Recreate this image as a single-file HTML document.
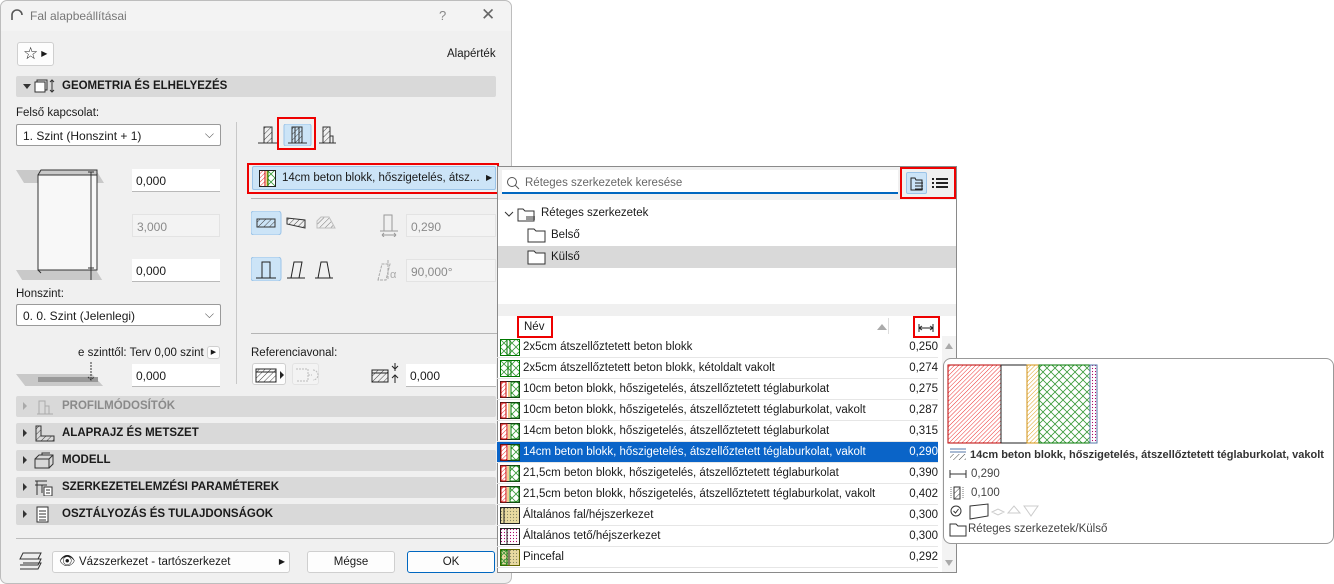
<!DOCTYPE html>
<html><head><meta charset="utf-8"><style>
*{box-sizing:border-box;margin:0;padding:0}
body{width:1334px;height:584px;background:#fff;position:relative;overflow:hidden;font-family:"Liberation Sans",sans-serif;font-size:12px;color:#1a1a1a}
.a{position:absolute}
.dlg{left:0;top:0;width:512px;height:584px;background:#f0f0f0;border:1px solid #bdbdbd;border-radius:7px}
.inp{position:absolute;background:#fff;border-bottom:1px solid #b9b9b9;height:23px;padding:5px 4px;font-size:12px}
.inp.dis{background:#f3f3f3;border:1px solid #e3e3e3;color:#8a8a8a}
.sel{position:absolute;background:#fff;border:1px solid #9a9a9a;border-radius:2px;height:22px;padding:4px 6px}
.bar{position:absolute;left:16px;width:480px;height:21px;background:#d9d9d9;border-radius:2px;font-weight:bold;font-size:11.5px;padding:4px 0 0 46px}
.bar .tri{position:absolute;left:7px;top:6px;width:0;height:0;border-left:4px solid #333;border-top:4px solid transparent;border-bottom:4px solid transparent}
.bar svg{position:absolute;left:18px;top:2px}
.red{position:absolute;border:2px solid #e00;}
.btn{position:absolute;background:#fdfdfd;border:1px solid #cfcfcf;border-radius:3px;text-align:center;padding-top:4px}
.row{position:absolute;left:497px;width:441px;height:21px;border-bottom:1px solid #e6e6e6;font-size:11.5px}
.row .n{position:absolute;left:26px;top:4px;white-space:nowrap}
.row .v{position:absolute;right:0;top:4px}
.row svg{position:absolute;left:3px;top:2px}
.row.s{background:#0a64c8;color:#fff}
</style></head><body>
<svg width="0" height="0" style="position:absolute"><defs>
<pattern id="hr" width="3" height="3" patternUnits="userSpaceOnUse" patternTransform="rotate(45)"><line x1="0" y1="0" x2="0" y2="3" stroke="#e33" stroke-width="1"/></pattern>
<pattern id="hk" width="4" height="4" patternUnits="userSpaceOnUse" patternTransform="rotate(45)"><line x1="0" y1="0" x2="0" y2="4" stroke="#444" stroke-width="1"/></pattern>
<pattern id="hy" width="3" height="3" patternUnits="userSpaceOnUse" patternTransform="rotate(45)"><line x1="0" y1="0" x2="0" y2="3" stroke="#e0a020" stroke-width="1"/></pattern>
<pattern id="xg" width="8" height="8" patternUnits="userSpaceOnUse"><path d="M0 0L8 8M8 0L0 8" stroke="#3a9a3a" stroke-width=".8"/></pattern>
<pattern id="dt" width="3" height="3" patternUnits="userSpaceOnUse"><circle cx="1.5" cy="1.5" r=".6" fill="#a06"/></pattern>
<pattern id="yd" width="3" height="3" patternUnits="userSpaceOnUse"><rect width="3" height="3" fill="#e8d9a0"/><circle cx="1.5" cy="1.5" r=".6" fill="#886"/></pattern>
</defs></svg>

<div class="a dlg"></div>
<div class="a" style="left:1px;top:1px;width:510px;height:30px;background:#f3f3f3;border-radius:7px 7px 0 0"></div>
<svg class="a" style="left:10px;top:9px" width="14" height="12"><path d="M2 11V6a5 5 0 0 1 10 0" fill="none" stroke="#555" stroke-width="1.6"/></svg>
<div class="a" style="left:30px;top:9px;color:#777;font-size:12px">Fal alapbeállításai</div>
<div class="a" style="left:439px;top:8px;color:#888;font-size:13px">?</div>
<div class="a" style="left:481px;top:5px;color:#666;font-size:17px">✕</div>
<div class="btn" style="left:17px;top:42px;width:37px;height:24px;padding:1px 0 0 0;text-align:left"><span style="font-size:17px;margin-left:5px">☆</span><span style="font-size:8px;margin-left:3px;position:relative;top:-3px">▶</span></div>
<div class="a" style="left:447px;top:48px;font-size:11.5px">Alapérték</div>

<div class="bar" style="top:76px;padding-left:46px"><span class="tri" style="border-left:4px solid transparent;border-right:4px solid transparent;border-top:5px solid #333;border-bottom:0;top:8px"></span><svg width="22" height="17"><rect x="3" y="2" width="10" height="10" fill="none" stroke="#333"/><rect x="1" y="4" width="10" height="10" fill="#fff" stroke="#333"/><path d="M18 2v12M16 4l2-2 2 2M16 12l2 2 2-2" stroke="#333" fill="none"/></svg>GEOMETRIA ÉS ELHELYEZÉS</div>

<div class="a" style="left:16px;top:107px;font-size:11.5px">Felső kapcsolat:</div>
<div class="sel" style="left:16px;top:124px;width:205px">1. Szint (Honszint + 1)<span style="position:absolute;right:6px;top:2px;color:#555">⌵</span></div>

<svg class="a" style="left:16px;top:168px" width="90" height="112">
<polygon points="0,2 80,2 88,15 8,15" fill="#c9c9c9"/>
<polygon points="0,102 80,102 88,115 8,115" fill="#c9c9c9"/>
<rect x="22" y="7" width="59" height="95" fill="#f8f8f8" stroke="#333"/>
<path d="M22 7L25 2h56l0 5M22 7v95l3 3" fill="none" stroke="#333"/>
<path d="M75 4v108M72 4h6M72 100h6" stroke="#333" fill="none"/>
</svg>
<div class="inp" style="left:132px;top:169px;width:88px">0,000</div>
<div class="inp dis" style="left:132px;top:214px;width:88px">3,000</div>
<div class="inp" style="left:132px;top:259px;width:88px">0,000</div>
<div class="a" style="left:16px;top:288px;font-size:11.5px">Honszint:</div>
<div class="sel" style="left:16px;top:304px;width:205px">0. 0. Szint (Jelenlegi)<span style="position:absolute;right:6px;top:2px;color:#555">⌵</span></div>
<div class="a" style="left:78px;top:347px;font-size:11.5px">e szinttől: Terv 0,00 szint</div>
<div class="btn" style="left:207px;top:346px;width:13px;height:13px;padding:0;font-size:7px;line-height:12px">▶</div>
<svg class="a" style="left:16px;top:362px" width="90" height="24"><polygon points="0,12 76,12 88,25 10,25" fill="#c9c9c9"/><rect x="22" y="15" width="60" height="5" fill="#999"/><path d="M75 0v18M72 15l3 3 3-3" stroke="#333" fill="none" stroke-dasharray="2 1"/></svg>
<div class="inp" style="left:132px;top:364px;width:88px">0,000</div>

<div class="a" style="left:236px;top:122px;width:1px;height:262px;background:#c8c8c8"></div>

<svg class="a" style="left:257px;top:124px" width="80" height="22">
<rect x="7" y="3" width="8" height="16" fill="url(#hk)" stroke="#333"/><path d="M1 19h19" stroke="#333"/>
<rect x="27" y="0" width="27" height="22" rx="2" fill="#cce4f7" stroke="#9cc4e8"/>
<rect x="35" y="3" width="10" height="16" fill="url(#hk)" stroke="#333"/><path d="M31 19h19M38 3v16M42 3v16" stroke="#333"/>
<rect x="66" y="3" width="7" height="16" fill="url(#hk)" stroke="#333"/><path d="M62 19h17M73 12h3v7" stroke="#333" fill="none"/>
</svg>
<div class="red" style="left:277px;top:117px;width:39px;height:33px"></div>

<div class="a" style="left:252px;top:166px;width:244px;height:24px;background:#cce4f7;border:1px solid #9cc4e8;border-radius:2px"></div>
<svg class="a" style="left:259px;top:170px" width="17" height="17"><rect x=".5" y=".5" width="16" height="16" fill="#fff" stroke="#222"/><rect x="1" y="1" width="5" height="15" fill="url(#hr)"/><path d="M6 1v15" stroke="#c00"/><path d="M8 1v15" stroke="#e0a020"/><rect x="9" y="1" width="7" height="15" fill="url(#xg)"/><path d="M9 1v15" stroke="#070"/></svg>
<div class="a" style="left:282px;top:172px;font-size:11.5px">14cm beton blokk, hőszigetelés, átsz...</div>
<div class="a" style="left:486px;top:173px;font-size:8px">▶</div>
<div class="red" style="left:247px;top:163px;width:252px;height:31px"></div>
<div class="a" style="left:251px;top:198px;width:246px;height:1px;background:#b5b5b5"></div>

<svg class="a" style="left:251px;top:211px" width="90" height="24">
<rect x="0" y="0" width="30" height="24" rx="3" fill="#cce4f7" stroke="#9cc4e8"/>
<rect x="6" y="8" width="18" height="8" fill="url(#hk)" stroke="#333"/>
<polygon points="36,7 54,9 54,17 36,13" fill="url(#hk)" stroke="#333"/>
<path d="M66 17V10l4-4h8l6 11z" fill="url(#hk)" stroke="#aaa" opacity=".7"/>
</svg>
<svg class="a" style="left:378px;top:213px" width="22" height="24"><path d="M6 2h8v16h-8zM2 18h18M4 22h14M4 22l2-2M4 22l2 2M18 22l-2-2M18 22l-2 2" stroke="#999" fill="none"/></svg>
<div class="inp dis" style="left:406px;top:214px;width:90px">0,290</div>
<svg class="a" style="left:251px;top:257px" width="90" height="24">
<rect x="0" y="0" width="30" height="24" rx="3" fill="#cce4f7" stroke="#9cc4e8"/>
<path d="M5 21h20M11 21V5h8v16" stroke="#222" fill="none"/>
<path d="M36 21h18M40 21l3-16h8l-3 16" stroke="#222" fill="none"/>
<path d="M64 21h18M67 21l3-16h6l3 16" stroke="#222" fill="none"/>
</svg>
<svg class="a" style="left:376px;top:258px" width="26" height="24"><path d="M2 22l4-16h8l-4 16zM12 2v20" stroke="#aaa" fill="none" stroke-dasharray="3 1"/><text x="14" y="20" font-size="11" fill="#aaa" font-family="Liberation Sans">α</text></svg>
<div class="inp dis" style="left:406px;top:259px;width:90px">90,000°</div>

<div class="a" style="left:251px;top:333px;width:246px;height:1px;background:#b5b5b5"></div>
<div class="a" style="left:251px;top:347px;font-size:11.5px">Referenciavonal:</div>
<div class="btn" style="left:252px;top:363px;width:34px;height:22px;padding:0"><svg width="34" height="22"><rect x="3" y="5" width="20" height="13" fill="url(#hk)" stroke="#222"/><path d="M3 8h20" stroke="#222"/><path d="M27 7v8l4-4z" fill="#222"/></svg></div>
<div class="btn" style="left:292px;top:363px;width:27px;height:22px;padding:0;border-color:#e3e3e3;background:#f3f3f3"><svg width="27" height="22"><path d="M3 5h12v12H3M15 11h4M20 6a5 5 0 0 1 0 10" stroke="#bbb" fill="none" stroke-dasharray="2 1"/></svg></div>
<svg class="a" style="left:370px;top:361px" width="30" height="26"><rect x="2" y="9" width="16" height="12" fill="url(#hk)" stroke="#222"/><path d="M2 12h16M25 2v8M22 5l3 3 3-3M25 14v8M22 17l3-3 3 3" stroke="#222" fill="none"/></svg>
<div class="inp" style="left:406px;top:364px;width:90px">0,000</div>

<div class="bar" style="top:396px;color:#8a8a8a"><span class="tri" style="border-left-color:#aaa"></span><svg width="22" height="17"><path d="M3 16h16M5 16V3h6v13M11 8h4v8" stroke="#aaa" fill="none"/></svg>PROFILMÓDOSÍTÓK</div>
<div class="bar" style="top:423px"><span class="tri"></span><svg width="22" height="17"><path d="M2 1v15h18v-5H7V1z" fill="url(#hk)" stroke="#333"/></svg>ALAPRAJZ ÉS METSZET</div>
<div class="bar" style="top:450px"><span class="tri"></span><svg width="22" height="17"><path d="M1 7h14v9H1zM1 7l4-4h14v9l-4 4M15 7l4-4" stroke="#333" fill="none"/><path d="M8 3V1h8" stroke="#333" fill="none"/></svg>MODELL</div>
<div class="bar" style="top:477px"><span class="tri"></span><svg width="22" height="17"><path d="M1 2h12M1 6h12M3 2v14M8 6v8" stroke="#333" fill="none"/><rect x="10" y="8" width="8" height="9" fill="#fff" stroke="#333"/><path d="M12 11h4M12 14h4" stroke="#333"/></svg>SZERKEZETELEMZÉSI PARAMÉTEREK</div>
<div class="bar" style="top:504px"><span class="tri"></span><svg width="22" height="17"><rect x="3" y="1" width="11" height="15" fill="#fff" stroke="#333"/><path d="M5 5h7M5 8h7M5 11h7M5 14h7" stroke="#333"/></svg>OSZTÁLYOZÁS ÉS TULAJDONSÁGOK</div>

<div class="a" style="left:16px;top:538px;width:481px;height:1px;background:#bdbdbd"></div>
<svg class="a" style="left:18px;top:550px" width="26" height="22"><path d="M5 3h18l-3 6H2zM5 9h18l-3 6H2M5 13h18l-3 6H2" stroke="#333" fill="#eee"/></svg>
<div class="btn" style="left:52px;top:551px;width:238px;height:22px;text-align:left;padding:4px 0 0 26px;font-size:11.5px">Vázszerkezet - tartószerkezet<span style="position:absolute;left:6px;top:1px;font-size:13px">👁</span><span style="position:absolute;right:4px;top:5px;font-size:8px">▶</span></div>
<div class="btn" style="left:307px;top:551px;width:88px;height:22px;font-size:11.5px">Mégse</div>
<div class="btn" style="left:407px;top:551px;width:88px;height:22px;font-size:11.5px;border:1.5px solid #0067c0">OK</div>

<div class="a" style="left:497px;top:166px;width:460px;height:407px;background:#fff;border:1px solid #8a8a8a"></div>
<div class="a" style="left:498px;top:167px;width:458px;height:33px;background:#f0f0f0"></div>
<div class="a" style="left:502px;top:170px;width:396px;height:24px;background:#fff;border-bottom:2px solid #0067c0"></div>
<svg class="a" style="left:506px;top:176px" width="14" height="14"><circle cx="6" cy="6" r="4.5" stroke="#555" fill="none"/><path d="M9 9l4 4" stroke="#555"/></svg>
<div class="a" style="left:525px;top:177px;font-size:11.5px;color:#666">Réteges szerkezetek keresése</div>
<div class="a" style="left:906px;top:172px;width:21px;height:22px;background:#cce4f7;border:1px solid #9cc4e8;border-radius:2px"></div>
<svg class="a" style="left:906px;top:172px" width="46" height="22"><path d="M5 6h4l1 2h6v10H5z" stroke="#222" fill="none"/><path d="M9 11h8M9 14h8M9 17h8" stroke="#222"/><path d="M26 7h2M26 11h2M26 15h2M30 7h12M30 11h12M30 15h12" stroke="#222" stroke-width="2"/></svg>
<div class="red" style="left:900px;top:167px;width:56px;height:32px"></div>

<svg class="a" style="left:504px;top:205px" width="34" height="18"><path d="M1 7l4 4 4-4" stroke="#333" fill="none"/><path d="M14 4h5l2 2h9v10H14z" stroke="#333" fill="#fff"/><path d="M22 12h9M22 14h9" stroke="#333"/></svg>
<div class="a" style="left:541px;top:207px;font-size:11.5px">Réteges szerkezetek</div>
<svg class="a" style="left:527px;top:227px" width="20" height="16"><path d="M1 2h6l2 2h9v11H1z" stroke="#333" fill="#fff"/></svg>
<div class="a" style="left:551px;top:229px;font-size:11.5px">Belső</div>
<div class="a" style="left:498px;top:246px;width:458px;height:22px;background:#d9d9d9"></div>
<svg class="a" style="left:527px;top:249px" width="20" height="16"><path d="M1 2h6l2 2h9v11H1z" stroke="#333" fill="#fff"/></svg>
<div class="a" style="left:551px;top:251px;font-size:11.5px">Külső</div>
<div class="a" style="left:498px;top:304px;width:458px;height:12px;background:#f0f0f0"></div>
<div class="a" style="left:524px;top:321px;font-size:11.5px">Név</div>
<div class="a" style="left:877px;top:324px;width:0;height:0;border-left:5px solid transparent;border-right:5px solid transparent;border-bottom:6px solid #aaa"></div>
<div class="a" style="left:888px;top:318px;width:1px;height:16px;background:#ddd"></div>
<svg class="a" style="left:918px;top:323px" width="16" height="10"><path d="M1 1v8M15 1v8M1 5h14M1 5l3-2M1 5l3 2M15 5l-3-2M15 5l-3 2" stroke="#222" fill="none"/></svg>
<div class="red" style="left:517px;top:316px;width:36px;height:22px"></div>
<div class="red" style="left:913px;top:316px;width:27px;height:22px"></div>
<div class="a" style="left:942px;top:336px;width:14px;height:236px;background:#f3f3f3"></div>
<div class="a" style="left:945px;top:343px;border-left:4px solid transparent;border-right:4px solid transparent;border-bottom:6px solid #aaa"></div>
<div class="a" style="left:945px;top:560px;border-left:4px solid transparent;border-right:4px solid transparent;border-top:6px solid #aaa"></div>

<div class="row" style="top:337px"><svg width="20" height="17"><rect x=".5" y=".5" width="19" height="16" fill="url(#xg)" stroke="#070"/><path d="M7 1v15M10 1v15" stroke="#070"/></svg><span class="n">2x5cm átszellőztetett beton blokk</span><span class="v">0,250</span></div>
<div class="row" style="top:358px"><svg width="20" height="17"><rect x=".5" y=".5" width="19" height="16" fill="url(#xg)" stroke="#070"/><path d="M8 1v15M11 1v15" stroke="#070"/></svg><span class="n">2x5cm átszellőztetett beton blokk, kétoldalt vakolt</span><span class="v">0,274</span></div>
<div class="row" style="top:379px"><svg width="20" height="17"><rect x=".5" y=".5" width="19" height="16" fill="#fff" stroke="#222"/><rect x="1" y="1" width="5" height="15" fill="url(#hr)" stroke="#c00"/><path d="M9 1v15" stroke="#e0a020"/><rect x="11" y="1" width="8" height="15" fill="url(#xg)" stroke="#070"/></svg><span class="n">10cm beton blokk, hőszigetelés, átszellőztetett téglaburkolat</span><span class="v">0,275</span></div>
<div class="row" style="top:400px"><svg width="20" height="17"><rect x=".5" y=".5" width="19" height="16" fill="#fff" stroke="#222"/><rect x="1" y="1" width="5" height="15" fill="url(#hr)" stroke="#c00"/><path d="M9 1v15" stroke="#e0a020"/><rect x="11" y="1" width="8" height="15" fill="url(#xg)" stroke="#070"/></svg><span class="n">10cm beton blokk, hőszigetelés, átszellőztetett téglaburkolat, vakolt</span><span class="v">0,287</span></div>
<div class="row" style="top:421px"><svg width="20" height="17"><rect x=".5" y=".5" width="19" height="16" fill="#fff" stroke="#222"/><rect x="1" y="1" width="6" height="15" fill="url(#hr)" stroke="#c00"/><path d="M9 1v15" stroke="#e0a020"/><rect x="11" y="1" width="8" height="15" fill="url(#xg)" stroke="#070"/></svg><span class="n">14cm beton blokk, hőszigetelés, átszellőztetett téglaburkolat</span><span class="v">0,315</span></div>
<div class="row s" style="top:442px"><svg width="20" height="17"><rect x=".5" y=".5" width="19" height="16" fill="#fff" stroke="#222"/><rect x="1" y="1" width="6" height="15" fill="url(#hr)" stroke="#c00"/><path d="M9 1v15" stroke="#e0a020"/><rect x="11" y="1" width="8" height="15" fill="url(#xg)" stroke="#070"/></svg><span class="n">14cm beton blokk, hőszigetelés, átszellőztetett téglaburkolat, vakolt</span><span class="v">0,290</span></div>
<div class="row" style="top:463px"><svg width="20" height="17"><rect x=".5" y=".5" width="19" height="16" fill="#fff" stroke="#222"/><rect x="1" y="1" width="5" height="15" fill="url(#hr)" stroke="#c00"/><path d="M8 1v15" stroke="#e0a020"/><rect x="10" y="1" width="9" height="15" fill="url(#xg)" stroke="#070"/></svg><span class="n">21,5cm beton blokk, hőszigetelés, átszellőztetett téglaburkolat</span><span class="v">0,390</span></div>
<div class="row" style="top:484px"><svg width="20" height="17"><rect x=".5" y=".5" width="19" height="16" fill="#fff" stroke="#222"/><rect x="1" y="1" width="5" height="15" fill="url(#hr)" stroke="#c00"/><path d="M8 1v15" stroke="#e0a020"/><rect x="10" y="1" width="9" height="15" fill="url(#xg)" stroke="#070"/></svg><span class="n">21,5cm beton blokk, hőszigetelés, átszellőztetett téglaburkolat, vakolt</span><span class="v">0,402</span></div>
<div class="row" style="top:505px"><svg width="20" height="17"><rect x=".5" y=".5" width="19" height="16" fill="url(#yd)" stroke="#222"/><path d="M4 1v15" stroke="#222"/></svg><span class="n">Általános fal/héjszerkezet</span><span class="v">0,300</span></div>
<div class="row" style="top:526px"><svg width="20" height="17"><rect x=".5" y=".5" width="19" height="16" fill="url(#dt)" stroke="#222"/><path d="M7 1v15" stroke="#222"/></svg><span class="n">Általános tető/héjszerkezet</span><span class="v">0,300</span></div>
<div class="row" style="top:547px"><svg width="20" height="17"><rect x=".5" y=".5" width="19" height="16" fill="url(#yd)" stroke="#660"/><rect x="1" y="1" width="6" height="15" fill="url(#xg)" stroke="#070"/><path d="M9 1v15" stroke="#222"/></svg><span class="n">Pincefal</span><span class="v">0,292</span></div>

<div class="a" style="left:943px;top:358px;width:391px;height:186px;background:#fff;border:1px solid #999;border-radius:8px"></div>
<svg class="a" style="left:947px;top:364px" width="152" height="80">
<rect x="1" y="1" width="53" height="78" fill="url(#hr)" stroke="#b00"/>
<rect x="54" y="1" width="26" height="78" fill="#fff" stroke="#222"/>
<rect x="80" y="1" width="12" height="78" fill="url(#hy)" stroke="#d09010"/>
<rect x="92" y="1" width="51" height="78" fill="url(#xg)" stroke="#070"/>
<rect x="143" y="1" width="7" height="78" fill="url(#dt)" stroke="#57a"/>
</svg>
<svg class="a" style="left:949px;top:447px" width="18" height="14"><path d="M1 2h16M1 5h16" stroke="#57a"/><rect x="1" y="7" width="16" height="6" fill="url(#hk)"/></svg>
<div class="a" style="left:970px;top:449px;font-size:11px;font-weight:bold;color:#333;white-space:nowrap">14cm beton blokk, hőszigetelés, átszellőztetett téglaburkolat, vakolt</div>
<svg class="a" style="left:949px;top:469px" width="18" height="10"><path d="M1 1v8M17 1v8M1 5h16" stroke="#333"/></svg>
<div class="a" style="left:971px;top:468px;font-size:11.5px;color:#444">0,290</div>
<svg class="a" style="left:950px;top:486px" width="14" height="14"><rect x="4" y="1" width="6" height="12" fill="url(#hk)" stroke="#333"/><path d="M1 1v12M13 1v12" stroke="#777" stroke-dasharray="1 1"/></svg>
<div class="a" style="left:971px;top:487px;font-size:11.5px;color:#444">0,100</div>
<svg class="a" style="left:950px;top:503px" width="95" height="18"><circle cx="6" cy="8" r="5" stroke="#333" fill="none"/><path d="M3.5 8l2 2 3-4" stroke="#333" fill="none"/><path d="M20 3l18-2v12l-18 3z" stroke="#333" fill="none"/><path d="M42 9l6-3 6 3-6 3zM58 10l6-7 6 7zM74 3l14 0-7 10z" stroke="#ccc" fill="none"/></svg>
<svg class="a" style="left:949px;top:522px" width="18" height="15"><path d="M1 2h6l2 2h8v10H1z" stroke="#333" fill="#fff"/></svg>
<div class="a" style="left:968px;top:523px;font-size:11.5px;color:#444">Réteges szerkezetek/Külső</div>
</body></html>
